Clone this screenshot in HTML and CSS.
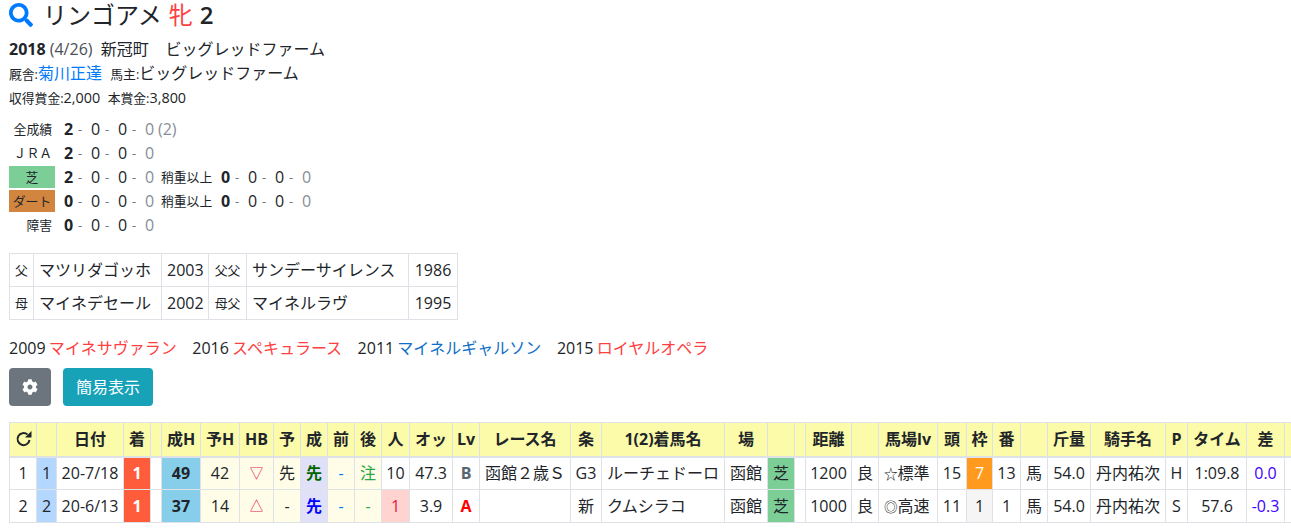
FILE: index.html
```html
<!DOCTYPE html>
<html lang="ja">
<head>
    <meta charset="UTF-8">
    <meta name="viewport" content="width=device-width, initial-scale=1.0">
    <title>リンゴアメ</title>
    <link rel="stylesheet" href="styles.css">
</head>
<body>
    <div class="horseName">
        <svg class="searchIcon" viewBox="0 0 512 512"><path d="M505 442.7L405.3 343c-4.5-4.5-10.6-7-17-7H372c27.6-35.3 44-79.7 44-128C416 93.1 322.9 0 208 0S0 93.1 0 208s93.1 208 208 208c48.3 0 92.7-16.4 128-44v16.3c0 6.4 2.5 12.5 7 17l99.7 99.7c9.4 9.4 24.6 9.4 33.9 0l28.3-28.3c9.4-9.4 9.4-24.6.1-34zM208 336c-70.7 0-128-57.2-128-128 0-70.7 57.2-128 128-128 70.7 0 128 57.2 128 128 0 70.7-57.2 128-128 128z"/></svg>
        <span>リンゴアメ</span> <span class="red">牝</span> <span class="age">2</span>
    </div>
    <div class="info1"><b>2018</b> <span class="date">(4/26)</span>&nbsp; 新冠町 &nbsp;&nbsp; ビッグレッドファーム</div>
    <div class="info2"><small>厩舎:</small><a class="blue">菊川正達</a>&nbsp; <small>馬主:</small>ビッグレッドファーム</div>
    <div class="info3"><small>収得賞金:</small>2,000&nbsp; <small>本賞金:</small>3,800</div>

    <div class="stats">
        <div class="statRow">
            <span class="statLabel">全成績</span>
            <span class="num first">2</span><span class="sep">-</span><span class="num">0</span><span class="sep">-</span><span class="num">0</span><span class="sep">-</span><span class="num gray">0</span><span class="gray starts">(2)</span>
        </div>
        <div class="statRow">
            <span class="statLabel">ＪＲＡ</span>
            <span class="num first">2</span><span class="sep">-</span><span class="num">0</span><span class="sep">-</span><span class="num">0</span><span class="sep">-</span><span class="num gray">0</span>
        </div>
        <div class="statRow">
            <span class="statLabel center turf">芝</span>
            <span class="num first">2</span><span class="sep">-</span><span class="num">0</span><span class="sep">-</span><span class="num">0</span><span class="sep">-</span><span class="num gray">0</span>
            <span class="subLabel">稍重以上</span>
            <span class="num first">0</span><span class="sep">-</span><span class="num">0</span><span class="sep">-</span><span class="num">0</span><span class="sep">-</span><span class="num gray">0</span>
        </div>
        <div class="statRow">
            <span class="statLabel center dirt">ダート</span>
            <span class="num first">0</span><span class="sep">-</span><span class="num">0</span><span class="sep">-</span><span class="num">0</span><span class="sep">-</span><span class="num gray">0</span>
            <span class="subLabel">稍重以上</span>
            <span class="num first">0</span><span class="sep">-</span><span class="num">0</span><span class="sep">-</span><span class="num">0</span><span class="sep">-</span><span class="num gray">0</span>
        </div>
        <div class="statRow">
            <span class="statLabel">障害</span>
            <span class="num first">0</span><span class="sep">-</span><span class="num">0</span><span class="sep">-</span><span class="num">0</span><span class="sep">-</span><span class="num gray">0</span>
        </div>
    </div>

    <table class="pedigree">
        <tr>
            <td class="rel">父</td><td class="pname">マツリダゴッホ</td><td>2003</td>
            <td class="rel">父父</td><td class="pname">サンデーサイレンス</td><td>1986</td>
        </tr>
        <tr>
            <td class="rel">母</td><td class="pname">マイネデセール</td><td>2002</td>
            <td class="rel">母父</td><td class="pname">マイネルラヴ</td><td>1995</td>
        </tr>
    </table>

    <div class="siblings">
        <span>2009 <a class="red">マイネサヴァラン</a></span>
        <span>2016 <a class="red">スペキュラース</a></span>
        <span>2011 <a class="blue2">マイネルギャルソン</a></span>
        <span>2015 <a class="red">ロイヤルオペラ</a></span>
    </div>

    <div class="buttons">
        <div class="btn btnGear">
            <svg class="gearIcon" viewBox="0 0 512 512"><path d="M487.4 315.7l-42.6-24.6c4.3-23.2 4.3-47 0-70.2l42.6-24.6c4.9-2.8 7.1-8.6 5.5-14-11.1-35.6-30-67.8-54.7-94.6-3.8-4.1-10-5.1-14.8-2.3L380.8 110c-17.9-15.4-38.5-27.3-60.8-35.1V25.8c0-5.6-3.9-10.5-9.4-11.7-36.7-8.2-74.3-7.8-109.2 0-5.5 1.2-9.4 6.1-9.4 11.7V75c-22.2 7.9-42.8 19.8-60.8 35.1L88.7 85.5c-4.9-2.8-11-1.9-14.8 2.3-24.7 26.7-43.6 58.9-54.7 94.6-1.7 5.4.6 11.2 5.5 14L67.3 221c-4.3 23.2-4.3 47 0 70.2l-42.6 24.6c-4.9 2.8-7.1 8.6-5.5 14 11.1 35.6 30 67.8 54.7 94.6 3.8 4.1 10 5.1 14.8 2.3l42.6-24.6c17.9 15.4 38.5 27.3 60.8 35.1v49.2c0 5.6 3.9 10.5 9.4 11.7 36.7 8.2 74.3 7.8 109.2 0 5.5-1.2 9.4-6.1 9.4-11.7v-49.2c22.2-7.9 42.8-19.8 60.8-35.1l42.6 24.6c4.9 2.8 11 1.9 14.8-2.3 24.7-26.7 43.6-58.9 54.7-94.6 1.5-5.5-.7-11.3-5.6-14.1zM256 336c-44.1 0-80-35.9-80-80s35.9-80 80-80 80 35.9 80 80-35.9 80-80 80z"/></svg>
        </div>
        <div class="btn btnTeal">簡易表示</div>
    </div>

    <div class="raceWrap">
        <table class="races">
            <colgroup>
                <col><col><col><col><col><col><col><col><col><col><col><col><col><col><col><col><col><col><col><col><col><col><col><col><col><col><col><col><col><col><col><col><col><col>
            </colgroup>
            <thead>
                <tr>
                    <th><svg class="redoIcon" viewBox="0 0 16 16"><path class="redoArc" d="M14 9A6 6 0 1 1 12 3.6"/><path d="M16 0V6.5H9.5Z"/></svg></th>
                    <th></th><th>日付</th><th>着</th><th></th><th>成H</th><th>予H</th><th>HB</th><th>予</th><th>成</th><th>前</th><th>後</th><th>人</th><th>オッ</th><th>Lv</th><th>レース名</th><th>条</th><th>1(2)着馬名</th><th>場</th><th></th><th></th><th>距離</th><th></th><th>馬場lv</th><th>頭</th><th>枠</th><th>番</th><th></th><th>斤量</th><th>騎手名</th><th>P</th><th>タイム</th><th>差</th><th class="lastHead">コ</th>
                </tr>
            </thead>
            <tbody>
                <tr>
                    <td>1</td><td class="bgBlue">1</td><td>20-7/18</td><td class="bgRed"><b>1</b></td><td></td><td class="bgSky"><b>49</b></td><td class="bgCream">42</td><td class="bgCream triRed">▽</td><td class="bgCream">先</td><td class="bgLav"><b class="dkgreen">先</b></td><td class="bgCream blue">-</td><td class="bgCream green">注</td><td>10</td><td>47.3</td><td class="lvB"><b>B</b></td><td class="left">函館２歳Ｓ</td><td>G3</td><td class="left">ルーチェドーロ</td><td>函館</td><td class="turf">芝</td><td></td><td>1200</td><td>良</td><td class="left"><span class="mark">☆</span>標準</td><td>15</td><td class="bgOrange">7</td><td>13</td><td>馬</td><td>54.0</td><td>丹内祐次</td><td>H</td><td>1:09.8</td><td class="purple">0.0</td><td></td>
                </tr>
                <tr>
                    <td>2</td><td class="bgBlue">2</td><td>20-6/13</td><td class="bgRed"><b>1</b></td><td></td><td class="bgSky"><b>37</b></td><td class="bgCream">14</td><td class="bgCream triRed">△</td><td class="bgCream">-</td><td class="bgLav"><b class="pureBlue">先</b></td><td class="bgCream blue">-</td><td class="bgCream green">-</td><td class="bgPink">1</td><td>3.9</td><td class="lvA"><b>A</b></td><td></td><td>新</td><td class="left">クムシラコ</td><td>函館</td><td class="turf">芝</td><td></td><td>1000</td><td>良</td><td class="left"><span class="mark">◎</span>高速</td><td>11</td><td class="bgGray">1</td><td>1</td><td>馬</td><td>54.0</td><td>丹内祐次</td><td>S</td><td>57.6</td><td class="purple">-0.3</td><td></td>
                </tr>
            </tbody>
        </table>
    </div>
</body>
</html>
```

FILE: styles.css
```css
html, body {
    overflow: hidden;
}

body {
    margin: 0;
    padding: 0 9px;
    font-family: "Open Sans", "Noto Sans CJK JP", sans-serif;
    font-size: 16px;
    line-height: 24px;
    color: #212529;
    background-color: white;
}

small {
    font-size: 12.8px;
}

.red {
    color: #ff4040;
}

.blue {
    color: #007bff;
}

.blue2 {
    color: #0f6fc6;
}

.horseName {
    display: flex;
    align-items: center;
    gap: 7px;
    height: 30px;
    font-size: 24px;
    line-height: 30px;
}

.searchIcon {
    width: 24px;
    height: 24px;
    fill: #007bff;
    margin-right: 3px;
}

.age {
    font-weight: 600;
}

.info1 {
    margin-top: 7px;
}

.date {
    color: #495057;
}

.info3 {
    font-size: 14.4px;
}

.stats {
    margin-top: 7px;
}

.statRow {
    display: flex;
    align-items: center;
    height: 24px;
}

.statLabel {
    width: 46px;
    height: 22px;
    margin-right: 9px;
    font-size: 12.8px;
    line-height: 22px;
    text-align: right;
    padding-right: 3px;
    box-sizing: border-box;
}

.center {
    text-align: center;
    padding-right: 0;
}

.turf {
    background-color: #7bcf96;
}

.dirt {
    background-color: #d1853f;
}

.num {
    width: 14px;
}

.first {
    font-weight: bold;
}

.sep {
    width: 13px;
    color: #6c757d;
    font-size: 13px;
}

.gray {
    color: #868e96;
}

.starts {
    margin-left: -1px;
}

.subLabel {
    width: 52px;
    margin-left: 2px;
    margin-right: 8px;
    font-size: 12.8px;
}

.pedigree {
    border-collapse: collapse;
    margin-top: 16px;
    table-layout: fixed;
    width: 449px;
}

.pedigree td {
    border: 1px solid #dee2e6;
    height: 33px;
    padding: 0 5px;
    box-sizing: border-box;
    text-align: center;
    white-space: nowrap;
}

.pedigree td:nth-child(1) {
    width: 24px;
}

.pedigree td:nth-child(2) {
    width: 128px;
}

.pedigree td:nth-child(3) {
    width: 47px;
}

.pedigree td:nth-child(4) {
    width: 38px;
}

.pedigree td:nth-child(5) {
    width: 162px;
}

.pedigree td.rel {
    font-size: 12.8px;
    padding: 0;
}

.pedigree td.pname {
    text-align: left;
}

.siblings {
    display: flex;
    gap: 15.5px;
    margin-top: 16px;
    word-spacing: -1px;
}

.buttons {
    display: flex;
    gap: 12px;
    margin-top: 8px;
}

.btn {
    height: 38px;
    border-radius: 4px;
    color: white;
    display: flex;
    align-items: center;
    justify-content: center;
}

.btnGear {
    width: 42px;
    background-color: #6c757d;
}

.gearIcon {
    width: 16px;
    height: 16px;
    fill: white;
}

.btnTeal {
    width: 90px;
    background-color: #17a2b8;
}

.raceWrap {
    margin-top: 16px;
}

.races {
    border-collapse: collapse;
    table-layout: fixed;
    width: 1315px;
}

.races th, .races td {
    border: 1px solid #dee2e6;
    padding: 0;
    height: 33px;
    text-align: center;
    white-space: nowrap;
    overflow: hidden;
    box-sizing: border-box;
}

.races th {
    height: 34px;
    background-color: #fbfbaa;
    border-bottom-width: 2px;
    font-weight: bold;
}

.races td.left {
    text-align: left;
    padding-left: 5px;
}

.redoIcon {
    width: 17px;
    height: 16px;
    fill: #212529;
    vertical-align: -2px;
}

.redoArc {
    fill: none;
    stroke: #212529;
    stroke-width: 2;
}

.lastHead {
    color: #c9853a;
    text-align: left !important;
    padding-left: 4px !important;
}

.mark {
    font-size: 13.6px;
}

.races col:nth-child(1) { width: 27px; }
.races col:nth-child(2) { width: 20px; }
.races col:nth-child(3) { width: 67px; }
.races col:nth-child(4) { width: 27px; }
.races col:nth-child(5) { width: 11px; }
.races col:nth-child(6) { width: 39px; }
.races col:nth-child(7) { width: 39px; }
.races col:nth-child(8) { width: 34px; }
.races col:nth-child(9) { width: 27px; }
.races col:nth-child(10) { width: 27px; }
.races col:nth-child(11) { width: 27px; }
.races col:nth-child(12) { width: 27px; }
.races col:nth-child(13) { width: 28px; }
.races col:nth-child(14) { width: 43px; }
.races col:nth-child(15) { width: 27px; }
.races col:nth-child(16) { width: 91px; }
.races col:nth-child(17) { width: 31px; }
.races col:nth-child(18) { width: 123px; }
.races col:nth-child(19) { width: 43px; }
.races col:nth-child(20) { width: 27px; }
.races col:nth-child(21) { width: 11px; }
.races col:nth-child(22) { width: 46px; }
.races col:nth-child(23) { width: 27px; }
.races col:nth-child(24) { width: 59px; }
.races col:nth-child(25) { width: 29px; }
.races col:nth-child(26) { width: 26px; }
.races col:nth-child(27) { width: 28px; }
.races col:nth-child(28) { width: 27px; }
.races col:nth-child(29) { width: 43px; }
.races col:nth-child(30) { width: 75px; }
.races col:nth-child(31) { width: 22px; }
.races col:nth-child(32) { width: 59px; }
.races col:nth-child(33) { width: 38px; }
.races col:nth-child(34) { width: 40px; }

.bgBlue {
    background-color: #b3d7ff;
}

.bgRed {
    background-color: #ff5c3c;
    color: white;
}

.bgSky {
    background-color: #87ceeb;
}

.bgCream {
    background-color: #fffde7;
}

.bgLav {
    background-color: #e0e0f8;
}

.bgPink {
    background-color: #ffd3cf;
    color: #e8174a;
}

.bgOrange {
    background-color: #ff9a1e;
    color: white;
}

.bgGray {
    background-color: #f5f5f5;
}

.triRed {
    color: #e8174a;
    font-size: 13.5px;
}

.green {
    color: #28a745;
}

.dkgreen {
    color: #006400;
}

.pureBlue {
    color: #0000ff;
}

.purple {
    color: #4000ff;
}

.lvB {
    color: #5a6570;
}

.lvA {
    color: #ff0000;
}
```
